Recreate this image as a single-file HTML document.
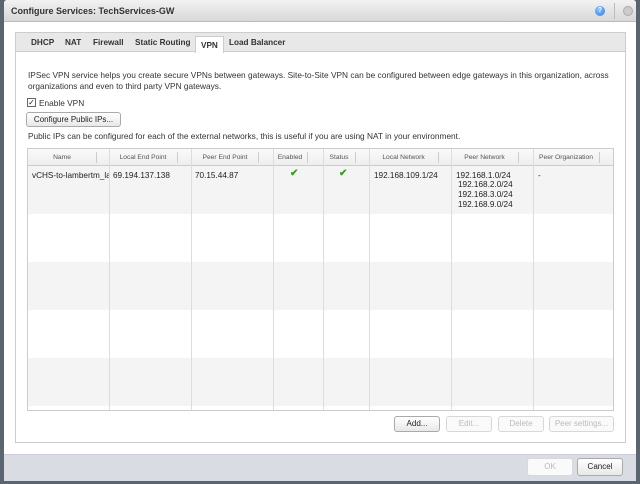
<!DOCTYPE html><html><head><style>
*{box-sizing:border-box;margin:0;padding:0}
body{width:640px;height:484px;background:#5b6570;font-family:"Liberation Sans",sans-serif;font-size:8px;color:#222;position:relative;overflow:hidden}
.dlg{position:absolute;left:4px;top:0;width:632px;height:481px;background:#fff;border-radius:3px;overflow:hidden}
.title{height:22px;background:linear-gradient(#f2f2f2,#d8d8d8);border-bottom:1px solid #bbb;font-weight:bold;font-size:9px;padding:6px 0 0 7px;color:#333}
.help{position:absolute;left:591px;top:6px;width:10px;height:10px;border-radius:50%;background:radial-gradient(circle at 40% 35%,#8cc4ff,#2a7ae0);color:#fff;font-size:7px;text-align:center;line-height:10px;font-weight:bold}
.sep{position:absolute;left:610px;top:3px;width:1px;height:16px;background:#bbb}
.close{position:absolute;left:619px;top:6px;width:10px;height:10px;border-radius:50%;background:#ccc;border:1px solid #aaa}
.panel{position:absolute;left:11px;top:32px;width:611px;height:411px;border:1px solid #ccc}
.tabs{height:19px;background:#e8e8e8;border-bottom:1px solid #ccc;position:relative}
.tab{position:absolute;top:5px;font-weight:bold;font-size:8.2px;color:#333}
.tab.act{top:3px;height:17px;background:#fff;border:1px solid #ccc;border-bottom:none;padding:4px 5px 0}
.t{position:absolute;font-size:8.3px;color:#333;white-space:nowrap}
.btn{position:absolute;border:1px solid #aaa;border-radius:3px;background:linear-gradient(#fff,#e8e8e8);text-align:center;font-size:8px;color:#222;line-height:14px}
.btn.dis{color:#bbb;border-color:#d8d8d8;background:#fafafa}
.grid{position:absolute;left:27px;top:148px;width:587px;height:263px;border:1px solid #ccc;overflow:hidden}
.hdr{position:absolute;left:0;top:0;width:100%;height:17px;background:linear-gradient(#fafafa,#eee);border-bottom:1px solid #ccc}
.row{position:absolute;left:0;width:100%;height:48px}
.vl{position:absolute;top:0;width:1px;height:100%;background:#ddd}
.hs{position:absolute;top:3px;width:1px;height:11px;background:#ccc}
.h{position:absolute;top:5px;font-size:6.7px;color:#555;text-align:center}
.c{position:absolute;font-size:8.2px;color:#222;white-space:nowrap}
.chk{position:absolute;color:#3aa01e;font-size:10px;font-weight:bold}
.foot{position:absolute;left:0;top:454px;width:100%;height:27px;background:#d9dde3;border-top:1px solid #ccd}
</style></head><body>
<div class="dlg">
<div class="title">Configure Services: TechServices-GW</div>
<div class="help">?</div><div class="sep"></div><div class="close"></div>
<div class="panel">
<div class="tabs">
<span class="tab" style="left:15px">DHCP</span>
<span class="tab" style="left:49px">NAT</span>
<span class="tab" style="left:77px">Firewall</span>
<span class="tab" style="left:119px">Static Routing</span>
<span class="tab act" style="left:179px">VPN</span>
<span class="tab" style="left:213px">Load Balancer</span>
</div>
</div>
<div class="t" style="left:24px;top:70px">IPSec VPN service helps you create secure VPNs between gateways. Site-to-Site VPN can be configured between edge gateways in this organization, across</div>
<div class="t" style="left:24px;top:81px">organizations and even to third party VPN gateways.</div>
<div style="position:absolute;left:23px;top:98px;width:9px;height:9px;border:1px solid #666;background:#fff;font-size:8px;line-height:7px;text-align:center">✓</div>
<div class="t" style="left:35px;top:98px">Enable VPN</div>
<div class="btn" style="left:22px;top:112px;width:95px;height:15px">Configure Public IPs...</div>
<div class="t" style="left:24px;top:131px">Public IPs can be configured for each of the external networks, this is useful if you are using NAT in your environment.</div>
</div>
<div class="grid">
<div class="row" style="top:17px;background:#f4f4f4"></div>
<div class="row" style="top:65px;background:#fff"></div>
<div class="row" style="top:113px;background:#f4f4f4"></div>
<div class="row" style="top:161px;background:#fff"></div>
<div class="row" style="top:209px;background:#f4f4f4"></div>
<div class="hdr"></div>
<div class="vl" style="left:81px"></div><div class="vl" style="left:163px"></div><div class="vl" style="left:245px"></div><div class="vl" style="left:295px"></div><div class="vl" style="left:341px"></div><div class="vl" style="left:423px"></div><div class="vl" style="left:505px"></div>
<div class="hs" style="left:68px"></div><div class="hs" style="left:149px"></div><div class="hs" style="left:230px"></div><div class="hs" style="left:279px"></div><div class="hs" style="left:327px"></div><div class="hs" style="left:410px"></div><div class="hs" style="left:490px"></div><div class="hs" style="left:571px"></div>
<div class="h" style="left:0;width:68px">Name</div>
<div class="h" style="left:81px;width:68px">Local End Point</div>
<div class="h" style="left:163px;width:68px">Peer End Point</div>
<div class="h" style="left:245px;width:34px">Enabled</div>
<div class="h" style="left:295px;width:32px">Status</div>
<div class="h" style="left:341px;width:69px">Local Network</div>
<div class="h" style="left:423px;width:67px">Peer Network</div>
<div class="h" style="left:505px;width:66px">Peer Organization</div>
<div class="c" style="left:4px;top:22px;width:77px;overflow:hidden">vCHS-to-lambertm_la</div>
<div class="c" style="left:85px;top:22px">69.194.137.138</div>
<div class="c" style="left:167px;top:22px">70.15.44.87</div>
<div class="chk" style="left:262px;top:19px">✔</div>
<div class="chk" style="left:311px;top:19px">✔</div>
<div class="c" style="left:346px;top:22px">192.168.109.1/24</div>
<div class="c" style="left:428px;top:22px">192.168.1.0/24</div>
<div class="c" style="left:430px;top:31px">192.168.2.0/24</div>
<div class="c" style="left:430px;top:41px">192.168.3.0/24</div>
<div class="c" style="left:430px;top:51px">192.168.9.0/24</div>
<div class="c" style="left:510px;top:22px">-</div>
</div>
<div class="btn" style="left:394px;top:416px;width:46px;height:16px">Add...</div>
<div class="btn dis" style="left:446px;top:416px;width:46px;height:16px">Edit...</div>
<div class="btn dis" style="left:498px;top:416px;width:46px;height:16px">Delete</div>
<div class="btn dis" style="left:549px;top:416px;width:65px;height:16px">Peer settings...</div>
<div class="foot" style="left:4px;width:632px"></div>
<div class="btn dis" style="left:527px;top:458px;width:46px;height:18px;line-height:16px">OK</div>
<div class="btn" style="left:577px;top:458px;width:46px;height:18px;line-height:16px">Cancel</div>
</body></html>
